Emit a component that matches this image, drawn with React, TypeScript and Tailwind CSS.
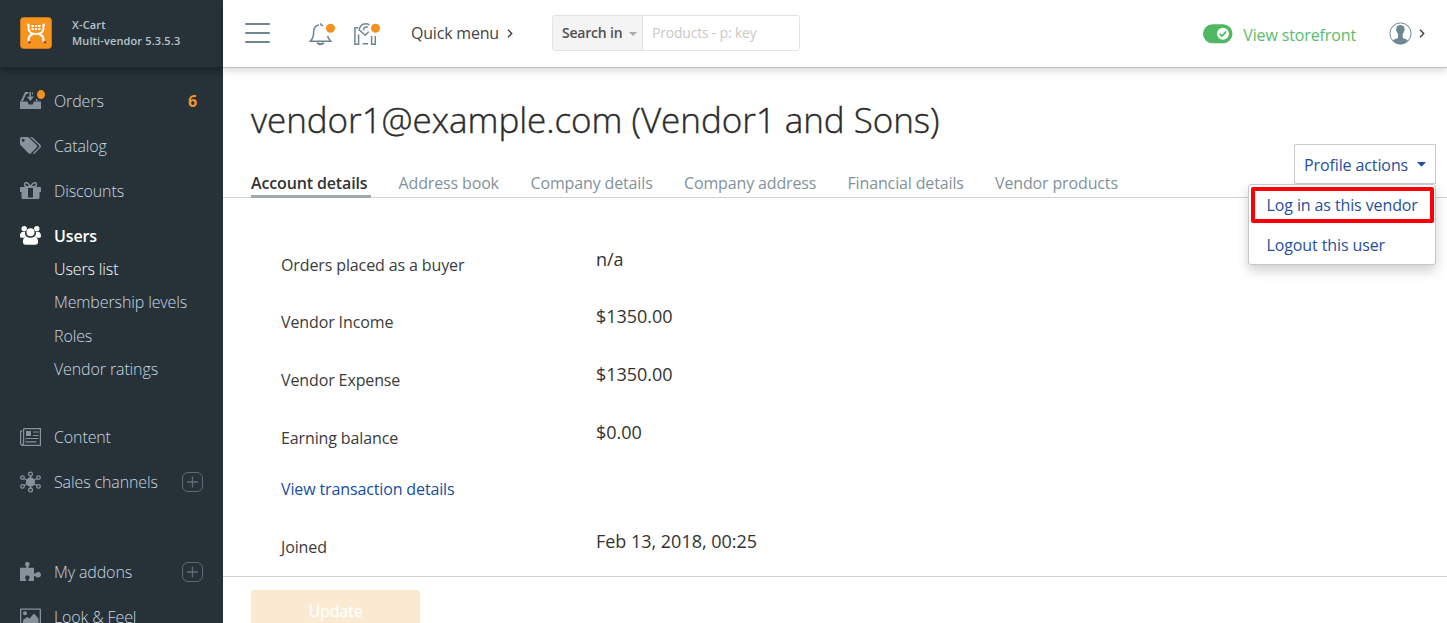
import React from "react";

const glyph = "block shrink-0";

function OrdersIcon() {
  return (
    <svg className={glyph} width="26" height="22" viewBox="0 0 26 22" fill="currentColor">
      <path d="M0 11.5h7.5l1.2 3h4l1.2-3H21V19H0z" />
      <path d="M5 2h3.6L8 4H6.2L3 11H.9zM9.4 2H11v4.5h3L10.4 11 6.8 6.8h2.6zM12.3 2H13v3h-.7z" />
      <path d="M16 8l2 3h-2z" />
      <ellipse cx="21" cy="4.600" rx="4" ry="4.500" fill="#f5921e" />
    </svg>
  );
}

function CatalogIcon() {
  return (
    <svg className={glyph} width="26" height="22" viewBox="0 0 26 22" fill="currentColor">
      <path fillRule="evenodd" d="M0 4c0-1.200.8-2 2-2h5.200c.7 0 1.300.3 1.800.8l7.600 7.300c.8.800.8 1.600 0 2.400l-5.600 5.700c-.8.800-1.700.8-2.500 0L.9 10.600C.3 10 0 9.400 0 8.700zM3.200 3.700a1.500 1.500 0 100 3 1.500 1.500 0 000-3z" />
      <path d="M10 2h1.200c.7 0 1.200.2 1.700.7l7.600 7.400c.7.700.7 1.600 0 2.300l-5.800 6c-.7.600-1.300.6-2 .2l6.300-6.300c.5-.6.500-1.200 0-1.700z" />
    </svg>
  );
}

function GiftIcon() {
  return (
    <svg className={glyph} width="26" height="22" viewBox="0 0 26 22" fill="currentColor">
      <path fillRule="evenodd" d="M.8 7H20.200c.5 0 .8.300.8.800V12h-1.500v5.500c0 1-.6 1.500-1.500 1.500H3c-1 0-1.500-.6-1.500-1.500V12H0V7.800C0 7.300.3 7 .8 7zM8 8v9.500h5V8z" />
      <path fill="none" stroke="currentColor" strokeWidth="1.500" d="M10.500 7C9 3.800 7.500 2.500 5.800 2.800 4 3.200 4 6 6 6.500c1.500.4 3 .5 4.500.5C12 3.800 13.500 2.500 15.200 2.800 17 3.200 17 6 15 6.500c-1.500.4-3 .5-4.500.5z" />
    </svg>
  );
}

function UsersIcon() {
  return (
    <svg className={glyph} width="26" height="22" viewBox="0 0 26 22" fill="currentColor">
      <circle cx="4.200" cy="3.700" r="2.700" />
      <circle cx="16.800" cy="3.700" r="2.700" />
      <circle cx="10.500" cy="7.300" r="4" />
      <path d="M2.500 7h2.600c-.3 2 .2 3.400 1.300 4.500-1 .2-1.800.6-2.400 1.300H1.600C.6 12.800 0 12 0 11c0-2.300.8-4 2.500-4zM18.500 7h-2.600c.3 2-.2 3.400-1.300 4.500 1 .2 1.800.6 2.400 1.300h2.400c1 0 1.600-.8 1.600-1.800 0-2.300-.8-4-2.500-4z" />
      <path d="M6.500 11.500c2.300 1.700 5.700 1.700 8 0 2.300.3 3.600 2.500 3.600 5.300 0 1.900-1 3-2.700 3H5.600c-1.700 0-2.700-1.100-2.700-3 0-2.800 1.300-5 3.600-5.300z" />
    </svg>
  );
}

function ContentIcon() {
  return (
    <svg className={glyph} width="26" height="22" viewBox="0 0 26 22" fill="none" stroke="currentColor" strokeWidth="1.200">
      <path d="M3.600 2.700h16.800v16.600H2.800C1.400 19.300.6 18.600.6 17V5h2M3.600 2.700v13.800c0 1.500-.3 2.300-1.300 2.300" />
      <path d="M6 5h5v5H6z" fill="currentColor" stroke="none" />
      <path d="M13 6h5.500M13 9.500h5.500M5.500 12.500h13M5.500 15.800h11" />
    </svg>
  );
}

function ChannelsIcon() {
  return (
    <svg className={glyph} width="26" height="22" viewBox="0 0 26 22" fill="none" stroke="currentColor" strokeWidth="1.300">
      <circle cx="10.500" cy="11" r="4.600" fill="currentColor" stroke="none" />
      <path d="M10.500 5v12M4 7.500l13 7M17 7.500l-13 7" />
      <circle cx="10.500" cy="3.100" r="1.900" />
      <circle cx="10.500" cy="18.900" r="1.900" />
      <circle cx="2.500" cy="6.600" r="1.800" />
      <circle cx="18.500" cy="6.600" r="1.800" />
      <circle cx="2.500" cy="15.400" r="1.800" />
      <circle cx="18.500" cy="15.400" r="1.800" />
    </svg>
  );
}

function AddonsIcon() {
  return (
    <svg className={glyph} width="26" height="22" viewBox="0 0 26 22" fill="currentColor">
      <path d="M0 6.800h5.500c1 0 1.300-.7.800-1.300C4.100 3.200 5 1 7.300 1s3.300 2.200 1.200 4.500c-.5.600-.2 1.300.8 1.300H14v4.500c0 1.300.8 1.700 1.600 1 2.200-2.200 5.400-1.300 5.400 1.500 0 2.700-3.200 3.800-5.400 1.600-.8-.8-1.600-.4-1.600.8V20H9.300c-1 0-1.200-.7-.6-1.400 1.600-1.900.9-4-1.300-4s-3.100 2.100-1.500 4c.6.700.4 1.400-.6 1.400H0z" />
    </svg>
  );
}

function LookIcon() {
  return (
    <svg className={glyph} width="26" height="22" viewBox="0 0 26 22" fill="currentColor">
      <path fillRule="evenodd" d="M1 2.500h19c.6 0 1 .4 1 1V20H0V3.500c0-.6.400-1 1-1zm.3 1.300v15h18.400v-15z" />
      <circle cx="5" cy="7.200" r="2" />
      <path d="M3 17v-3l4-3 2.500 1.500L14 7.500l4.500 5V17z" />
    </svg>
  );
}

function PlusBox() {
  return (
    <svg className="block mr-5 shrink-0" width="21" height="20" viewBox="0 0 21 20" fill="none" stroke="#5f6c73">
      <rect x=".5" y=".5" width="20" height="19" rx="5.500" />
      <path d="M5 10h11M10.500 4.500v11" strokeWidth="1.300" />
    </svg>
  );
}

interface NavItem {
  label: string;
  icon: React.ReactNode;
  active?: boolean;
  right?: React.ReactNode;
}

function NavRow({ label, icon, active, right }: NavItem) {
  return (
    <a className={`flex h-[45px] shrink-0 items-center pl-5 ${active ? "text-white" : "text-[#87929a]"}`}>
      {icon}
      <span className={`ml-2 whitespace-nowrap ${active ? "font-semibold text-white" : "font-light text-[#c9d7e0]"}`}>{label}</span>
      <span className="ml-auto">{right}</span>
    </a>
  );
}

function Sidebar() {
  return (
    <aside className="flex h-[623px] w-[223px] shrink-0 flex-col overflow-hidden bg-[#263238] text-base leading-[22px] tracking-[-0.12px]">
      <div className="flex h-[68px] shrink-0 items-center border-b border-[#1d262b] pb-[2px] pl-5 shadow-[0_2px_8px_rgba(0,0,0,0.4)]">
        <svg className="block shrink-0" width="32" height="32" viewBox="0 0 32 32" fill="none">
          <rect width="32" height="32" rx="4" fill="#b76d19" />
          <rect x=".7" y=".7" width="30.600" height="30.600" rx="3.500" fill="#f69420" />
          <path d="M7 7.800h1.600v4c0 3.400 2.200 5.200 7.400 5.200s7.400-1.800 7.400-5.200v-4H25" stroke="#fff" strokeWidth="1.900" />
          <path d="M8.600 24.800v-2.300c0-2.500 1.500-4.300 4-5.300M23.400 24.800v-2.300c0-2.500-1.500-4.300-4-5.300" stroke="#fff" strokeWidth="2.200" />
          <path d="M11.500 9h9M11.500 12h9" stroke="#fff" strokeWidth="1.900" strokeDasharray="2.200 1.200" />
          <circle cx="9.500" cy="25.200" r="1.300" fill="#b53a22" />
          <circle cx="25" cy="25.200" r="1.300" fill="#b53a22" />
        </svg>
        <div className="ml-5 text-[11px] font-semibold leading-4 tracking-[0.13px] text-[#b5c5cf]">
          <div>X-Cart</div>
          <div className="whitespace-nowrap">Multi-vendor 5.3.5.3</div>
        </div>
      </div>
      <nav className="flex flex-col pt-[10px]">
        <NavRow label="Orders" icon={<OrdersIcon />} right={<span className="mr-[26px] font-bold text-[#f4932f]">6</span>} />
        <NavRow label="Catalog" icon={<CatalogIcon />} />
        <NavRow label="Discounts" icon={<GiftIcon />} />
        <NavRow label="Users" icon={<UsersIcon />} active />
        <div className="flex h-[156px] flex-col pl-[54px] font-light leading-[33.300px] text-[#c9d7e0]">
          <a className="-mt-[5px] text-white">Users list</a>
          <a>Membership levels</a>
          <a>Roles</a>
          <a>Vendor ratings</a>
        </div>
        <NavRow label="Content" icon={<ContentIcon />} />
        <NavRow label="Sales channels" icon={<ChannelsIcon />} right={<PlusBox />} />
        <div className="h-[45px]" />
        <NavRow label="My addons" icon={<AddonsIcon />} right={<PlusBox />} />
        <NavRow label="Look &amp; Feel" icon={<LookIcon />} />
      </nav>
    </aside>
  );
}

function Chevron({ className }: { className: string }) {
  return (
    <svg className={className} width="6" height="9" viewBox="0 0 6 9" fill="none" stroke="#454545" strokeWidth="1.500">
      <path d="M1 .8l3.700 3.700L1 8.200" />
    </svg>
  );
}

function Header() {
  return (
    <header className="z-10 flex h-[68px] shrink-0 items-center border-b border-[#bcbfc0] bg-white pb-[2px] pl-[22px] shadow-[0_2px_8px_rgba(0,0,0,0.18)]">
      <svg width="25" height="22" viewBox="0 0 25 22" stroke="#6f8793" strokeWidth="2" strokeLinecap="round">
        <path d="M1 2h23M1 11h23M1 20h23" />
      </svg>
      <svg className="ml-[39px] mt-[2px]" width="28" height="24" viewBox="0 0 28 24" fill="none" stroke="#6f8793" strokeWidth="1.500">
        <path d="M10 3C6.500 3.500 4.700 6 4.700 9.500c0 5-1 7.500-3.500 9.800h20.600c-1.500-1.300-2.600-2.800-3.200-5.300M11.300 1.300l.8 1.700 2 .7" />
        <path d="M8.500 20.500c.4 2.200 5.600 2.200 6 0" strokeWidth="2" />
        <circle cx="21.500" cy="6.300" r="4.500" fill="#f5921e" stroke="none" />
      </svg>
      <svg className="ml-[16px] mt-[2px]" width="28" height="24" viewBox="0 0 28 24" fill="none" stroke="#6f8793" strokeWidth="1.500">
        <path d="M5 5.800H1.900v16.400h3.700V12.500M9.500 21.700h5.500M18.600 14v8.200h3.700V14" />
        <path d="M6 9c0-4.500 3-7.300 6.500-7.300 1.700 0 3 .5 4 1.300M15 5.300c-2.500-1-4.700.5-4.300 3M6 7.500l6.200 5.800 3.500-3.500" />
        <circle cx="22.500" cy="6.300" r="4.500" fill="#f5921e" stroke="none" />
      </svg>
      <span className="ml-[30px] whitespace-nowrap text-base tracking-[-0.2px] text-[#444]">Quick menu</span>
      <Chevron className="ml-2 mt-px" />
      <div className="ml-[39px] flex h-9 w-[248px] shrink-0 overflow-hidden rounded-[3px] border border-[#e4e4e4] text-sm tracking-[-0.2px]">
        <div className="flex w-[90px] shrink-0 items-center border-r border-[#e4e4e4] bg-[#f4f4f4] pl-[9px] font-semibold text-[#505050]">
          <span className="whitespace-nowrap">Search in</span>
          <svg className="ml-[7px] mt-[3px]" width="8" height="4" viewBox="0 0 8 4" fill="#aaa"><path d="M0 0h8L4 4z" /></svg>
        </div>
        <span className="flex items-center pl-[9px] text-[#c9c9c9]">Products - p: key</span>
      </div>
      <div className="ml-auto mt-[2px] flex items-center pr-[22px]">
        <svg width="30" height="20" viewBox="0 0 30 20">
          <rect width="29.500" height="19" y=".3" rx="9.500" fill="#50b862" />
          <circle cx="20" cy="9.800" r="6" fill="#fff" />
          <path d="M16.800 9.800l2.200 2.300 4-4.500" fill="none" stroke="#50b862" strokeWidth="1.700" />
        </svg>
        <span className="ml-[10px] mt-[3px] whitespace-nowrap text-base tracking-[-0.13px] text-[#5abb6b]">View storefront</span>
        <svg className="ml-[33px]" width="23" height="23" viewBox="0 0 23 23" fill="none">
          <circle cx="11.500" cy="11.500" r="10.600" stroke="#6f8793" strokeWidth="1" />
          <path d="M7.500 6.500C7.300 3.800 9 3 11.200 3s4.400.8 4.200 3.700c.6.800.2 2.500-.5 2.800-.2 1.200-.7 2-1.200 2.700v3.600c1.300 1 4 1.300 5.200 2.700-3.500 5-11.500 5-15 0 1.300-1.400 4-1.700 5.200-2.700v-3.600C8.500 11.500 8 10.700 7.900 9.500c-.8-.4-1.200-2.100-.4-3z" fill="#6f8793" />
        </svg>
        <Chevron className="-mt-px ml-[7px]" />
      </div>
    </header>
  );
}

function ProfileActions() {
  return (
    <div className="absolute right-[11px] top-[144px] z-20 flex flex-col items-end whitespace-nowrap text-base tracking-[-0.11px] text-[#264f9f]">
      <div className="flex h-10 w-[142px] items-center rounded-l-[2px] border border-[#c9cbcc] bg-white pl-[9px]">
        <span className="mt-[2px]">Profile actions</span>
        <svg className="ml-[9px]" width="9" height="5" viewBox="0 0 9 5" fill="#23509c"><path d="M0 0h9L4.500 4.700z" /></svg>
      </div>
      <div className="h-[81px] w-[188px] rounded-[3px] border border-[#c5c7c8] bg-white pl-[2px] pt-[2px] shadow-[0_6px_12px_rgba(0,0,0,0.18)]">
        <div className="flex h-9 w-[183px] items-center rounded-[2px] border-4 border-[#fc0007] pl-[11.500px]">Log in as this vendor</div>
        <div className="flex h-11 items-center pl-[15.500px]">Logout this user</div>
      </div>
    </div>
  );
}

function Field({ label, value, className }: { label: string; value: string; className: string }) {
  return (
    <div className={`flex shrink-0 items-start ${className}`}>
      <span className="mt-[6px] w-[315px] text-base leading-6 tracking-[-0.12px] text-[#3b3b3b]">{label}</span>
      <span className="text-lg leading-6 tracking-[-0.02px] text-[#333]">{value}</span>
    </div>
  );
}

export default function App() {
  return (
    <div className="relative flex h-[623px] w-[1447px] overflow-hidden bg-white font-['Open_Sans',sans-serif]">
      <Sidebar />
      <div className="flex min-w-0 flex-1 flex-col">
        <Header />
        <h1 className="mt-[28px] h-12 shrink-0 whitespace-nowrap pl-7 text-[35px] font-light leading-[48px] tracking-[-0.05px] text-[#2c2c2c] [-webkit-text-stroke:0.4px_#2c2c2c]">vendor1@example.com (Vendor1 and Sons)</h1>
        <div className="mt-[25px] flex h-[29px] shrink-0 border-b border-[#cfd3d5] pl-7 text-base leading-[28px] tracking-[-0.14px] text-[#82929b]">
          <a className="mr-[27.500px] h-[29px] w-[120px] whitespace-nowrap rounded-b-[1px] border-b-[3px] border-[#9ca8ad] font-semibold text-[#333]">Account details</a>
          <a className="w-[132px] whitespace-nowrap">Address book</a>
          <a className="w-[153.500px] whitespace-nowrap">Company details</a>
          <a className="w-[163.500px] whitespace-nowrap">Company address</a>
          <a className="w-[147.500px] whitespace-nowrap">Financial details</a>
          <a className="whitespace-nowrap">Vendor products</a>
        </div>
        <main className="flex h-[378px] shrink-0 flex-col pl-[58px] pt-[49px]">
          <Field label="Orders placed as a buyer" value="n/a" className="h-[57px]" />
          <Field label="Vendor Income" value="$1350.00" className="h-[58px]" />
          <Field label="Vendor Expense" value="$1350.00" className="h-[58px]" />
          <Field label="Earning balance" value="$0.00" className="h-[57px]" />
          <a className="h-[52px] shrink-0 text-base leading-6 tracking-[-0.13px] text-[#154ea1]">View transaction details</a>
          <Field label="Joined" value="Feb 13, 2018, 00:25" className="h-[40px]" />
        </main>
        <footer className="flex h-[47px] shrink-0 border-t border-[#cfd3d5] pl-7 pt-[13px]">
          <button className="h-[42px] w-[169px] shrink-0 rounded-[3px] bg-[#fbead2] text-base tracking-[-0.1px] text-white [-webkit-text-stroke:0.3px_#fff]">Update</button>
        </footer>
      </div>
      <ProfileActions />
    </div>
  );
}
